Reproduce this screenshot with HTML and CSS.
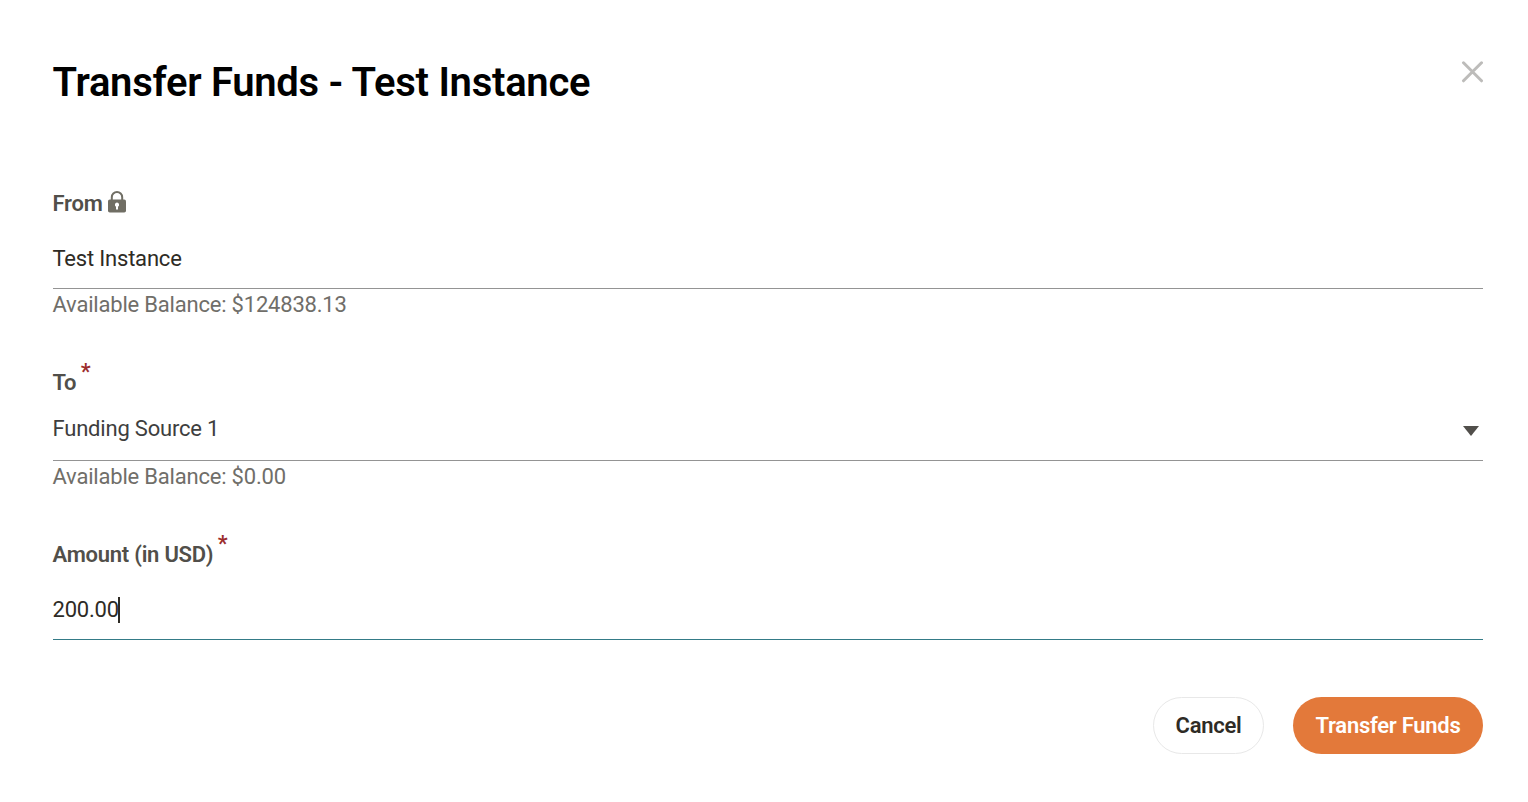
FILE: index.html
```html
<!DOCTYPE html>
<html lang="en">
<head>
<meta charset="utf-8">
<title>Transfer Funds</title>
<link rel="stylesheet" href="styles.css">
</head>
<body>
<main class="dialog">
  <header class="header">
    <h1 class="title">Transfer Funds - Test Instance</h1>
    <button class="close" aria-label="Close"><svg width="22" height="22" viewBox="0 0 22 22"><path d="M2.500 1.800l18 18M20.500 1.800l-18 18" fill="none" stroke="#bdbcba" stroke-width="3" stroke-linecap="round"/></svg></button>
  </header>
  <section class="field from">
    <div class="label"><span>From</span><svg class="lock" width="20" height="22" viewBox="0 0 20 22"><path d="M4.8 9.500V6.200a5.200 5.200 0 0 1 10.400 0v3.300" fill="none" stroke="#706e64" stroke-width="2"/><rect x="1" y="8.500" width="18" height="13" rx="1.800" fill="#706e64"/><path d="M10 11.600a2.200 2.200 0 0 1 1 4.100V18.500H9v-2.800a2.200 2.200 0 0 1 1-4.100z" fill="#fff"/></svg></div>
    <div class="value">Test Instance</div>
    <div class="hint">Available Balance: $124838.13</div>
  </section>
  <section class="field to">
    <div class="label"><span>To</span><span class="star">*</span></div>
    <div class="value select"><span>Funding Source 1</span><svg class="caret" width="16" height="10" viewBox="0 0 16 10"><path d="M0 0h16L8 10z" fill="#514f4b"/></svg></div>
    <div class="hint">Available Balance: $0.00</div>
  </section>
  <section class="field amount">
    <div class="label"><span>Amount (in USD)</span><span class="star">*</span></div>
    <div class="value"><span>200.00</span><i class="cursor"></i></div>
  </section>
  <footer class="actions">
    <button class="btn cancel">Cancel</button>
    <button class="btn primary">Transfer Funds</button>
  </footer>
</main>
</body>
</html>
```
FILE: styles.css
```css
* { box-sizing: border-box; }
body { margin: 0; background: #fff; font-family: Roboto, sans-serif; }
.dialog { height: 802px; padding: 59px 45px 0 53px; overflow: hidden; }
.header { display: flex; justify-content: space-between; align-items: flex-start; height: 130px; }
.title { margin: 0 0 0 -0.5px; font-size: 40px; line-height: 48px; font-weight: 600; letter-spacing: -0.28px; color: #000; }
.close { display: flex; margin-top: 2px; padding: 0; border: 0; background: none; }
.field { font-size: 22px; line-height: 30px; letter-spacing: -0.2px; }
.label, .value, .hint { text-indent: -0.5px; }
.label { display: flex; height: 30px; color: #514f4a; font-weight: 600; letter-spacing: -0.24px; }
.lock { margin: 2px 0 0 4.5px; }
.star { margin: -11px 0 0 5px; color: #9b2c2c; }
.value { display: flex; align-items: center; height: 70px; padding-top: 11px; border-bottom: 1px solid #949494; color: #2e2b25; }
.hint { padding-top: 1px; color: #706e69; height: 31px; }
.to { margin-top: 48px; }
.to .value { height: 63px; padding: 0 0 1px; color: #3e3e3e; }
.select { justify-content: space-between; }
.caret { margin: 5px 4px 0 0; }
.amount { margin-top: 48px; }
.amount .value { border-color: #347b87; }
.cursor { width: 2px; height: 26px; margin-left: -1px; background: #2e2b25; }
.actions { display: flex; justify-content: flex-end; gap: 29px; margin-top: 57px; }
.btn { height: 57px; padding: 0; border-radius: 29px; font: 600 22px Roboto, sans-serif; letter-spacing: -0.27px; }
.cancel { width: 111px; border: 1px solid #e8e8e8; background: #fff; color: #2e2b25; }
.primary { width: 190px; border: 0; background: #e3793a; color: #fff; }
```
